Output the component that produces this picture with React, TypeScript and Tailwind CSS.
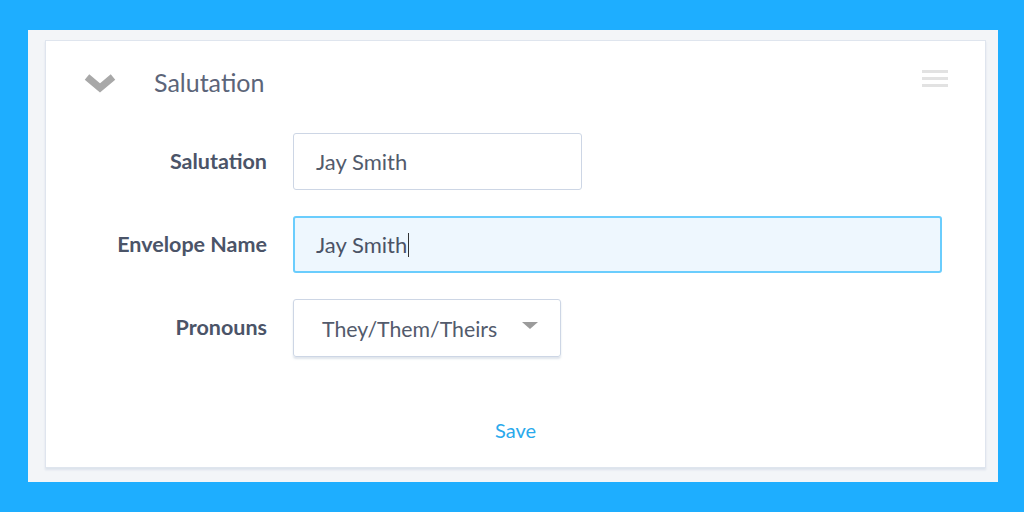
import React from 'react';

const font = { fontFamily: 'Lato, "Open Sans", Arial, sans-serif' };

function Row({ label, children }: { label: string; children: React.ReactNode }) {
  return (
    <div className="flex items-center h-[57px]">
      <div className="w-[221px] shrink-0 text-right text-[21.5px] font-bold text-[#4b5468]">{label}</div>
      <div className="ml-[26px] flex-1 h-full">{children}</div>
    </div>
  );
}

export default function App() {
  return (
    <div className="w-[1024px] h-[512px] bg-[#1eaeff] pt-[30px] pl-[28px]" style={font}>
      <div className="w-[970px] h-[452px] bg-[#f3f5f8] pt-[10px] pl-[17px] pr-[12px] pb-[14px]">
        <div className="h-full bg-white border border-[#dfe5ee] shadow-[0_2px_2px_rgba(150,170,200,0.25)] flex flex-col">
          {/* Header */}
          <div className="flex items-center h-[83px] pl-[37px] pr-[37px]">
            <svg width="34" height="22" viewBox="0 0 34 22" className="shrink-0">
              <path d="M4 5 L17 16 L30 5" fill="none" stroke="#a8a8a8" strokeWidth="7" strokeLinejoin="miter" />
            </svg>
            <span className="ml-[37px] text-[25px] text-[#5c6579]">Salutation</span>
            <div className="ml-auto flex flex-col gap-[4px] w-[26px] -mt-[8px]">
              <div className="h-[3px] bg-[#e2e2e2]" />
              <div className="h-[3px] bg-[#e2e2e2]" />
              <div className="h-[3px] bg-[#e2e2e2]" />
            </div>
          </div>

          {/* Form */}
          <div className="flex flex-col gap-[26px] pt-[9px] pr-[43px]">
            <Row label="Salutation">
              <div className="w-[289px] h-full border border-[#cdd6e5] rounded-[3px] flex items-center pl-[22px] text-[22px] text-[#535b6c]">
                Jay Smith
              </div>
            </Row>
            <Row label="Envelope Name">
              <div className="w-full h-full border-2 border-[#6acdfd] rounded-[3px] bg-[#eef7fe] flex items-center pl-[21px] text-[22px] text-[#4b5366]">
                Jay Smith
                <span className="inline-block w-[1px] h-[24px] bg-[#333] ml-[1px]" />
              </div>
            </Row>
            <Row label="Pronouns">
              <div className="w-[268px] h-[58px] border border-[#cdd6e5] rounded-[3px] shadow-[0_2px_2px_rgba(130,150,180,0.25)] flex items-center pl-[28px] pr-[22px] text-[21.3px] text-[#535b6c]">
                <span className="pt-[4px]">They/Them/Theirs</span>
                <svg width="16" height="8" viewBox="0 0 16 8" className="ml-auto -mt-[4px]">
                  <path d="M0 0 L16 0 L8 7 Z" fill="#9b9b9b" />
                </svg>
              </div>
            </Row>
          </div>

          {/* Footer */}
          <div className="flex-1 flex items-center justify-center pt-[36px]">
            <span className="text-[20px] text-[#2aa9ec]">Save</span>
          </div>
        </div>
      </div>
    </div>
  );
}
